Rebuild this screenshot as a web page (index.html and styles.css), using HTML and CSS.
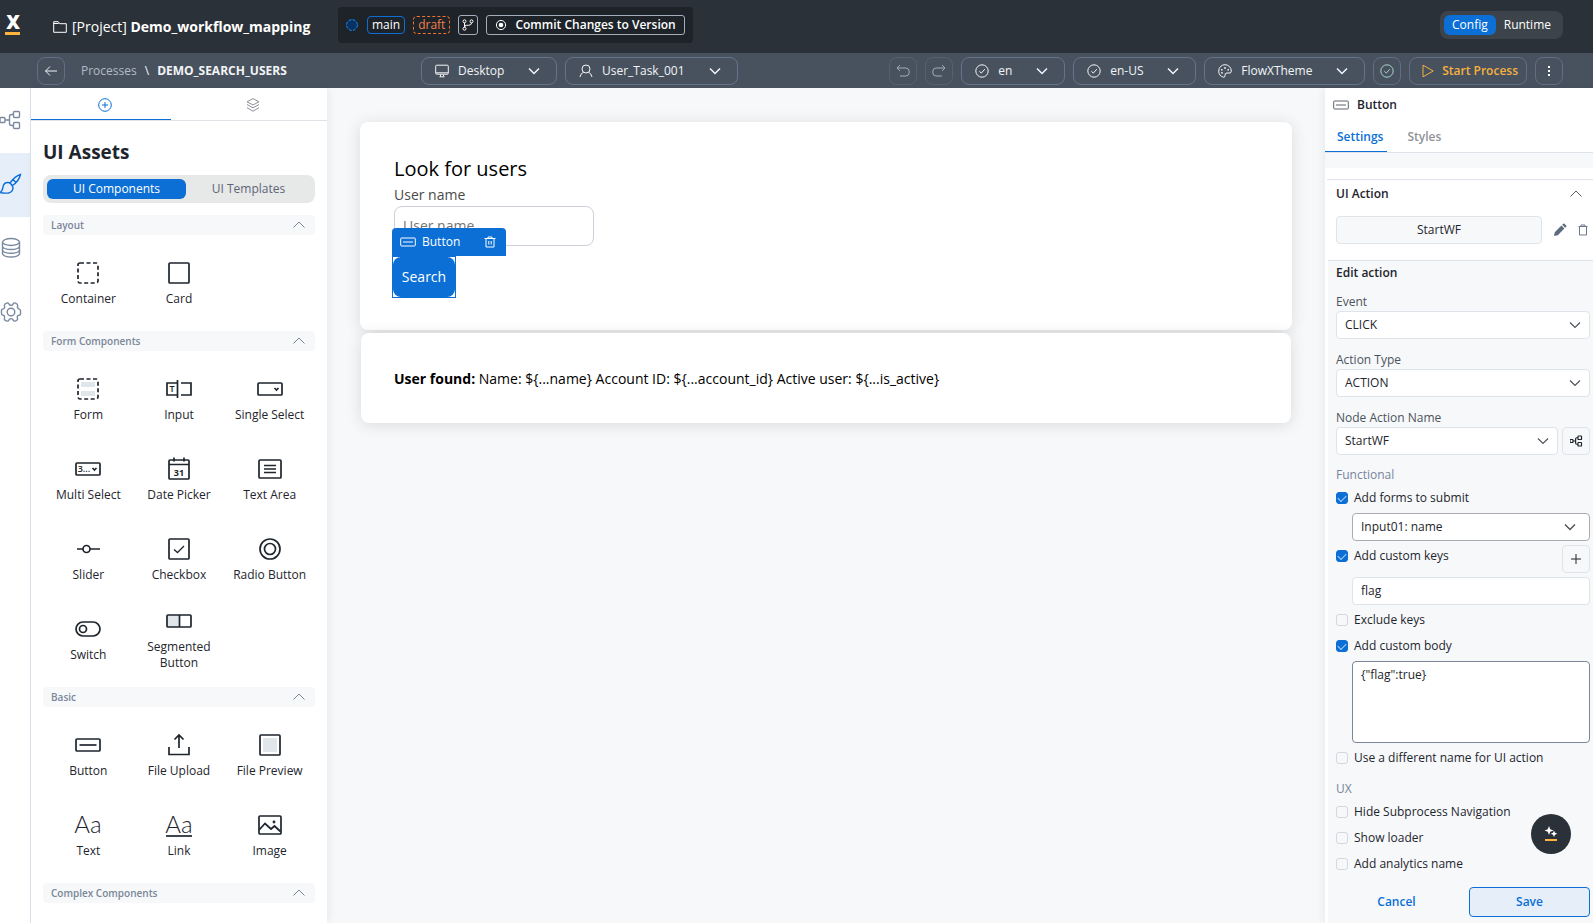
FILE: index.html
```html
<!DOCTYPE html>
<html lang="en">
<head>
  <meta charset="UTF-8">
  <title>Demo_workflow_mapping - DEMO_SEARCH_USERS</title>
  <meta name="viewport" content="width=device-width, initial-scale=1.0">
  <link rel="stylesheet" href="styles.css">
</head>
<body>
  <!-- shared icons -->
  <svg class="sprite" aria-hidden="true">
    <symbol id="down" viewBox="0 0 12 12"><path d="M1 3.5l5 5 5-5"/></symbol>
    <symbol id="up" viewBox="0 0 12 12"><path d="M.5 8.500L6 3l5.500 5.500"/></symbol>
    <symbol id="check-circle" viewBox="0 0 14 14"><circle cx="7" cy="7" r="6.200"/><path d="M4.300 7.200l2 1.900 3.500-3.900"/></symbol>
    <symbol id="flow" viewBox="0 0 22 20"><rect x="0" y="7.500" width="5" height="5" rx="1"/><rect x="13.500" y="1.500" width="6" height="6" rx="1"/><rect x="13.500" y="12.500" width="6" height="6" rx="1"/><path d="M5 10h4.500M13.500 4.500h-2q-2 0-2 2v7q0 2 2 2h2"/></symbol>
    <symbol id="button" viewBox="0 0 16 10"><rect x=".7" y="1" width="14.600" height="8" rx=".8"/><path d="M3 5h10"/></symbol>
    <symbol id="trash" viewBox="0 0 12 12"><path d="M.5 2.500h11M4 2.500v-1.500h4v1.500M2 2.500v8.500h8v-8.500M4.800 5v3.500M7.200 5v3.500"/></symbol>
  </svg>

  <header class="topbar">
    <div class="logo">
      <svg width="16" height="35" viewBox="0 0 16 35"><text x="8" y="20" class="logo-x">X</text><path d="M0 24.500h15" stroke="#ffb43c" stroke-width="3"/></svg>
    </div>
    <div class="project">
      <svg class="icon" width="14" height="14" viewBox="0 0 14 14"><path d="M.7 12.300V1.700h4.500l1.500 2h6.600v8.600z"/><path d="M.7 3.500h5" /></svg>
      <span>[Project] <b>Demo_workflow_mapping</b></span>
    </div>
    <div class="version">
      <svg width="13" height="12" viewBox="0 0 13 12"><circle cx="6" cy="6" r="5.400" fill="#063163" stroke="#2389ee" stroke-width="1" stroke-dasharray="3 1.240"/></svg>
      <span class="tag">main</span>
      <span class="tag draft">draft</span>
      <button class="branch" aria-label="Branches"><svg class="icon" width="12" height="12" viewBox="0 0 12 12"><circle cx="2.500" cy="2.300" r="1.500"/><circle cx="2.500" cy="9.700" r="1.500"/><circle cx="9.500" cy="2.300" r="1.500"/><path d="M2.500 3.800v4.400M9.500 3.800q0 2.500-3 2.500h-2q-2 0-2 2"/></svg></button>
      <button class="commit"><svg class="icon" width="12" height="12" viewBox="0 0 12 12"><circle cx="6" cy="6" r="4.600"/><circle cx="6" cy="6" r="2.300" fill="#fff" stroke="none"/></svg>Commit Changes to Version</button>
    </div>
    <div class="mode">
      <button class="active">Config</button>
      <button>Runtime</button>
    </div>
  </header>

  <nav class="subbar">
    <button class="square" aria-label="Back"><svg class="icon" width="14" height="14" viewBox="0 0 14 14"><path d="M6 2.500L1.500 7 6 11.500M1.500 7H13"/></svg></button>
    <div class="crumbs"><a href="#">Processes</a><span>\</span><b>DEMO_SEARCH_USERS</b></div>
    <div class="picker device">
      <svg class="icon lead" width="14" height="14" viewBox="0 0 14 14"><rect x=".7" y="1.200" width="12.600" height="9" rx="1"/><path d="M1 8.800h12M5.500 10.500v2M8.500 10.500v2M4.500 12.800h5"/></svg>
      <select aria-label="Device"><option>Desktop</option></select>
      <svg class="icon chev"><use href="#down"/></svg>
    </div>
    <div class="picker task">
      <svg class="icon lead" width="14" height="14" viewBox="0 0 14 14"><circle cx="7" cy="5" r="4"/><path d="M4.500 8.300Q1.500 9.500 1 13M9.500 8.300Q12.500 9.500 13 13"/></svg>
      <select aria-label="User task"><option>User_Task_001</option></select>
      <svg class="icon chev"><use href="#down"/></svg>
    </div>
    <div class="tools">
      <button class="square" disabled aria-label="Undo"><svg class="icon" width="14" height="14" viewBox="0 0 14 14"><path d="M4 1L1 4l3 3M1 4h9q3.300 0 3.300 4t-3.300 4H4"/></svg></button>
      <button class="square" disabled aria-label="Redo"><svg class="icon" width="14" height="14" viewBox="0 0 14 14"><path d="M10 1l3 3-3 3M13 4H4Q.7 4 .7 8T4 12h6"/></svg></button>
      <div class="picker lang">
        <svg class="icon lead"><use href="#check-circle"/></svg>
        <select aria-label="Language"><option>en</option></select>
        <svg class="icon chev"><use href="#down"/></svg>
      </div>
      <div class="picker locale">
        <svg class="icon lead"><use href="#check-circle"/></svg>
        <select aria-label="Locale"><option>en-US</option></select>
        <svg class="icon chev"><use href="#down"/></svg>
      </div>
      <div class="picker theme">
        <svg class="icon lead" width="14" height="14" viewBox="0 0 14 14"><path d="M5.500 13.200Q7 13.500 7 11.500 6.600 9 9 9h3q1.300-.2 1.300-2A6.300 6.300 0 0 0 .7 7q0 5 4.800 6.200z"/><g class="dots"><circle cx="4" cy="8.800" r=".9"/><circle cx="3.800" cy="5.800" r=".9"/><circle cx="7" cy="4" r=".9"/><circle cx="10.200" cy="5.800" r=".9"/></g></svg>
        <select aria-label="Theme"><option>FlowXTheme</option></select>
        <svg class="icon chev"><use href="#down"/></svg>
      </div>
      <button class="square ok" aria-label="Validate"><svg class="icon" width="14" height="14"><use href="#check-circle"/></svg></button>
      <button class="start"><svg class="icon" width="12" height="14" viewBox="0 0 12 14"><path d="M1 1.200L11.200 7 1 12.800z"/></svg>Start Process</button>
      <button class="square" aria-label="More"><svg width="14" height="14" viewBox="0 0 14 14" fill="#fff"><rect x="6" y="2" width="2" height="2"/><rect x="6" y="6" width="2" height="2"/><rect x="6" y="10" width="2" height="2"/></svg></button>
    </div>
  </nav>

  <main class="workspace">
    <aside class="rail">
      <button aria-label="Process"><svg class="icon" width="22" height="20"><use href="#flow"/></svg></button>
      <button class="active" aria-label="UI designer"><svg class="icon" width="22" height="22" viewBox="0 0 22 22"><path d="M10 10Q15 3 20.500 1.500 19 8 12.500 12.500zM8 9.500Q3.500 9.500 3 14 2.500 18 0 19.500q4 1 8.500.5 4.500-1 4.500-5.500Q11 9.500 8 9.500zM10 10l2.500 2.500M13 6.500l3 3"/></svg></button>
      <button aria-label="Data model"><svg class="icon" width="22" height="22" viewBox="0 0 22 22"><ellipse cx="11" cy="5" rx="8.500" ry="3.500"/><path d="M2.500 5v12q1.500 3 8.500 3t8.500-3V5M2.500 9.500q1.500 3 8.500 3t8.500-3M2.500 13.300q1.500 3 8.500 3t8.500-3"/></svg></button>
      <button aria-label="Settings"><svg class="icon" width="22" height="22" viewBox="0 0 22 22"><circle cx="11" cy="11" r="3.800"/><path d="M9.200 3.600Q8.700 1.300 6.500 2.200T4.300 4.500Q5.500 7 3.300 7.800T1.500 9.300v3.400q0 1.200 1.800 1.500T4.400 17.500q-.6 1.300 1.900 2.300t2.900-1.400q1.800-1.500 3.600 0 .6 2.400 2.900 1.400t1.900-2.300q-1.100-3 1.100-3.300t1.800-1.500V9.300q0-.8-1.800-1.500T17.700 4.500q0-1.300-2.200-2.300t-2.700 1.400q-1.800 1.400-3.600 0z"/></svg></button>
    </aside>

    <section class="assets">
      <div class="asset-tabs">
        <button class="active" aria-label="Add components"><svg class="icon" width="14" height="14" viewBox="0 0 14 14"><circle cx="7" cy="7" r="6.300"/><path d="M7 4v6M4 7h6"/></svg></button>
        <button aria-label="Layers"><svg class="icon" width="14" height="14" viewBox="0 0 14 14"><path d="M7 .6l6 3.200-6 3.200-6-3.200zM1 6.500l6 3.400 6-3.400M1 9.700l6 3.500 6-3.500"/></svg></button>
      </div>
      <div class="asset-body">
        <h1>UI Assets</h1>
        <div class="segmented">
          <button class="active">UI Components</button>
          <button>UI Templates</button>
        </div>

        <button class="group-title">Layout<svg class="icon"><use href="#up"/></svg></button>
        <div class="group">
          <div class="asset"><svg class="icon" viewBox="0 0 32 32"><rect x="6" y="6" width="20" height="20" rx="2" stroke-dasharray="4 2.500"/></svg>Container</div>
          <div class="asset"><svg class="icon" viewBox="0 0 32 32"><rect x="6" y="6" width="20" height="20" rx="1"/></svg>Card</div>
        </div>

        <button class="group-title">Form Components<svg class="icon"><use href="#up"/></svg></button>
        <div class="group">
          <div class="asset"><svg class="icon" viewBox="0 0 32 32"><path d="M9 9h14v5H9zM9 18h14v5H9z" class="tint"/><rect x="6" y="6" width="20" height="20" rx="2" stroke-dasharray="4 2.500"/></svg>Form</div>
          <div class="asset"><svg class="icon" viewBox="0 0 32 32"><path d="M14 10H4v12h10M14.500 7v18M18 10h10v12H18"/><text x="9" y="19" class="tiny">T</text></svg>Input</div>
          <div class="asset"><svg class="icon" viewBox="0 0 32 32"><rect x="4" y="10" width="24" height="12" rx="1"/><path d="M20.500 15l2 2 2-2"/></svg>Single Select</div>
          <div class="asset"><svg class="icon" viewBox="0 0 32 32"><rect x="4" y="10" width="24" height="12" rx="1"/><path d="M20.500 15l2 2 2-2"/><text x="12" y="19" class="tiny">3...</text></svg>Multi Select</div>
          <div class="asset"><svg class="icon" viewBox="0 0 32 32"><rect x="6" y="7" width="20" height="19" rx="1"/><path d="M6 11.500h20M11 4.500v4M21 4.500v4"/><text x="16" y="23" class="tiny day">31</text></svg>Date Picker</div>
          <div class="asset"><svg class="icon" viewBox="0 0 32 32"><rect x="5" y="7" width="22" height="18" rx="1"/><path d="M10 12.500h12M10 16h12M10 19.500h12"/></svg>Text Area</div>
          <div class="asset"><svg class="icon" viewBox="0 0 32 32"><circle cx="14.500" cy="16" r="3.500"/><path d="M5 16h6M18 16h10"/></svg>Slider</div>
          <div class="asset"><svg class="icon" viewBox="0 0 32 32"><rect x="6" y="6" width="20" height="20" rx="1"/><path d="M11 16.500l3.500 3L21 13" stroke-width="1.300"/></svg>Checkbox</div>
          <div class="asset"><svg class="icon" viewBox="0 0 32 32"><circle cx="16" cy="16" r="10"/><circle cx="16" cy="16" r="5.500"/></svg>Radio Button</div>
          <div class="asset"><svg class="icon" viewBox="0 0 32 32"><rect x="4" y="9" width="24" height="14" rx="7"/><circle cx="11" cy="16" r="3.500"/></svg>Switch</div>
          <div class="asset"><svg class="icon" viewBox="0 0 32 32"><path d="M4 10h13v12H4z" class="tint"/><rect x="4" y="10" width="24" height="12" rx="1"/><path d="M16.500 10v12"/></svg>Segmented<br>Button</div>
        </div>

        <button class="group-title">Basic<svg class="icon"><use href="#up"/></svg></button>
        <div class="group">
          <div class="asset"><svg class="icon" viewBox="0 0 32 32"><rect x="4" y="10" width="24" height="12" rx="1"/><path d="M7.500 16h17"/></svg>Button</div>
          <div class="asset"><svg class="icon" viewBox="0 0 32 32"><path d="M16 19V6M11.500 10.500L16 6l4.500 4.500M6 18v7.500h20V18"/></svg>File Upload</div>
          <div class="asset"><svg class="icon" viewBox="0 0 32 32"><path d="M9 9h14v14H9z" class="tint"/><rect x="6" y="6" width="20" height="20" rx="1"/></svg>File Preview</div>
          <div class="asset"><svg class="icon" viewBox="0 0 32 32"><text x="16" y="24" class="aa">Aa</text></svg>Text</div>
          <div class="asset"><svg class="icon" viewBox="0 0 32 32"><text x="16" y="24" class="aa">Aa</text><path d="M3 27h26"/></svg>Link</div>
          <div class="asset"><svg class="icon" viewBox="0 0 32 32"><rect x="5" y="7" width="22" height="18" rx="1"/><path d="M5.500 20.500l5.500-6 6 5.500 3.500-3 6 5.500"/><circle cx="20" cy="13" r=".6"/></svg>Image</div>
        </div>

        <button class="group-title">Complex Components<svg class="icon"><use href="#up"/></svg></button>
      </div>
    </section>

    <section class="canvas">
      <div class="card">
        <h2>Look for users</h2>
        <label class="field-label" for="userName">User name</label>
        <input class="user-name" id="userName" type="text" placeholder="User name">
        <div class="selected">
          <div class="selected-bar"><svg class="icon" width="16" height="10"><use href="#button"/></svg>Button<button aria-label="Delete"><svg class="icon" width="12" height="12"><use href="#trash"/></svg></button></div>
          <button class="search">Search</button>
        </div>
      </div>
      <div class="card result">
        <p><b>User found:</b> Name: ${...name} Account ID: ${...account_id} Active user: ${...is_active}</p>
      </div>
    </section>

    <aside class="inspector">
      <div class="inspector-title"><svg class="icon" width="16" height="10"><use href="#button"/></svg>Button</div>
      <div class="inspector-tabs">
        <button class="active">Settings</button>
        <button>Styles</button>
      </div>
      <div class="spacer"></div>
      <div class="ui-action">
        <div class="ui-action-title">UI Action<svg class="icon" width="12" height="12"><use href="#up"/></svg></div>
        <div class="ui-action-row">
          <button class="action-name">StartWF</button>
          <button class="bare" aria-label="Edit"><svg width="14" height="14" viewBox="0 0 14 14" fill="#5c6b80"><path d="M1 13l.8-3.800 6.600-6.600 3 3L4.800 12.200zM9.200 1.800l1-1q.6-.5 1.200 0l1.800 1.800q.5.600 0 1.200l-1 1z"/></svg></button>
          <button class="bare" aria-label="Delete"><svg class="icon" width="10" height="12" viewBox="0 0 10 12"><path d="M.5 2.500h9M3 2.500v-1.500h4v1.500M1.500 2.500v8.500h7v-8.500"/></svg></button>
        </div>
      </div>

      <form class="edit">
        <h3>Edit action</h3>
        <label class="caption" for="event">Event</label>
        <div class="select"><select id="event"><option>CLICK</option></select><svg class="icon"><use href="#down"/></svg></div>
        <label class="caption" for="actionType">Action Type</label>
        <div class="select"><select id="actionType"><option>ACTION</option></select><svg class="icon"><use href="#down"/></svg></div>
        <label class="caption" for="nodeAction">Node Action Name</label>
        <div class="node-row">
          <div class="select"><select id="nodeAction"><option>StartWF</option></select><svg class="icon"><use href="#down"/></svg></div>
          <button type="button" class="mini" aria-label="Open node"><svg class="icon" width="13" height="12"><use href="#flow"/></svg></button>
        </div>

        <div class="section-name">Functional</div>
        <label class="check"><input type="checkbox" checked>Add forms to submit</label>
        <div class="select nested strong"><select aria-label="Forms to submit"><option>Input01: name</option></select><svg class="icon"><use href="#down"/></svg></div>
        <div class="keys-row">
          <label class="check"><input type="checkbox" checked>Add custom keys</label>
          <button type="button" class="mini" aria-label="Add key"><svg class="icon" width="10" height="10" viewBox="0 0 10 10"><path d="M5 0v10M0 5h10"/></svg></button>
        </div>
        <div class="nested"><input class="text" type="text" value="flag" aria-label="Custom key"></div>
        <label class="check"><input type="checkbox">Exclude keys</label>
        <label class="check"><input type="checkbox" checked>Add custom body</label>
        <div class="nested"><textarea aria-label="Custom body">{"flag":true}</textarea></div>
        <label class="check"><input type="checkbox">Use a different name for UI action</label>

        <div class="section-name">UX</div>
        <label class="check"><input type="checkbox">Hide Subprocess Navigation</label>
        <label class="check"><input type="checkbox">Show loader</label>
        <label class="check"><input type="checkbox">Add analytics name</label>
        <div class="actions">
          <button type="button" class="cancel">Cancel</button>
          <button type="button" class="save">Save</button>
        </div>
      </form>
    </aside>
  </main>

  <button class="assistant" aria-label="Assistant">
    <svg width="16" height="16" viewBox="0 0 16 16"><path d="M6 0l1.200 3.300L10.500 4.500 7.200 5.700 6 9 4.800 5.700 1.500 4.500 4.800 3.300zM11 4.500l1 2.300 2.300 1-2.300 1-1 2.300-1-2.300-2.300-1 2.300-1z" fill="#fff"/><path d="M2 14h12" stroke="#ffb43c" stroke-width="2"/></svg>
  </button>
</body>
</html>
```

FILE: styles.css
```css
* {
  box-sizing: border-box;
}
body {
  font-family: 'Open Sans', Arial, sans-serif;
  font-size: 12px;
  line-height: 16px;
  color: #1e252d;
  margin: 0;
  height: 100vh;
  display: flex;
  flex-direction: column;
  overflow: hidden;
}
button, select, input, textarea {
  font: inherit;
  color: inherit;
  margin: 0;
}
button {
  display: flex;
  align-items: center;
  justify-content: center;
  background: none;
  border: none;
  padding: 0;
  cursor: pointer;
}
select {
  appearance: none;
  width: 100%;
  height: 28px;
}
b {
  font-weight: 700;
}
.sprite {
  position: absolute;
  width: 0;
  height: 0;
}
.icon {
  fill: none;
  stroke: currentColor;
  flex: none;
}

/* top bar */
.topbar {
  flex: none;
  height: 53px;
  background: #2b3138;
  color: #fff;
  display: flex;
  align-items: center;
  padding: 0 30px 0 5px;
}
.logo {
  display: flex;
  width: 48px;
}
.logo-x {
  font-size: 19px;
  font-weight: 800;
  text-anchor: middle;
  fill: #fff;
}
.project {
  display: flex;
  align-items: center;
  gap: 5px;
  font-size: 14px;
  width: 285px;
}
.version {
  display: flex;
  align-items: center;
  gap: 8px;
  height: 36px;
  padding: 0 8px;
  margin-bottom: 4px;
  border-radius: 4px;
  background: #1d2329;
}
.tag {
  border: 1px solid #0b6fd6;
  border-radius: 4px;
  padding: 0 4px;
}
.draft {
  border: 1px dashed #f2722f;
  color: #f08048;
}
.branch, .commit {
  height: 20px;
  border: 1px solid #a3adbb;
  border-radius: 3px;
}
.branch {
  width: 20px;
}
.commit {
  gap: 8px;
  padding: 0 8px;
  font-weight: 600;
}
.mode {
  display: flex;
  margin: 0 0 4px auto;
  padding: 4px;
  border-radius: 8px;
  background: #3d434a;
}
.mode button {
  height: 20px;
  padding: 0 8px;
  border-radius: 6px;
}
.mode .active {
  background: #0b6fd6;
}

/* process bar */
.subbar {
  flex: none;
  height: 35px;
  background: #48525f;
  color: #f2f4f6;
  display: flex;
  align-items: center;
  gap: 8px;
  padding: 1px 30px 0 37px;
}
.square {
  width: 28px;
  height: 28px;
  border: 1px solid #5f6f86;
  border-radius: 8px;
}
.square:disabled {
  color: #a4aab2;
  border-color: #556070;
}
.ok {
  color: #a9d3cc;
}
.crumbs {
  display: flex;
  gap: 8px;
  width: 340px;
  padding-left: 8px;
}
.crumbs a {
  color: #b4bac2;
  text-decoration: none;
}
.tools {
  display: flex;
  gap: 8px;
  margin-left: auto;
}
.picker {
  position: relative;
}
.picker select {
  background: transparent;
  border: 1px solid #64748b;
  border-radius: 8px;
  padding: 0 36px;
}
.picker .lead {
  position: absolute;
  left: 14px;
  top: 7px;
  width: 14px;
  height: 14px;
}
.picker .chev {
  position: absolute;
  right: 17px;
  top: 8px;
  width: 12px;
  height: 12px;
  stroke-width: 1.5;
}
.dots {
  fill: currentColor;
  stroke: none;
}
.device {
  width: 136px;
}
.task {
  width: 173px;
}
.lang {
  width: 104px;
}
.locale {
  width: 123px;
}
.theme {
  width: 161px;
}
.start {
  height: 28px;
  gap: 8px;
  padding: 0 8px 0 12px;
  border: 1px solid #5f6f86;
  border-radius: 8px;
  color: #f5b03e;
  font-weight: 600;
}

/* workspace */
.workspace {
  flex: 1;
  min-height: 0;
  display: flex;
  background: #f6f8fa;
}
.rail {
  flex: none;
  width: 31px;
  padding-top: 1px;
  border-right: 1px solid #dde3ea;
  background: #fff;
  color: #7b8aa0;
}
.rail button {
  width: 30px;
  height: 64px;
  padding-bottom: 2px;
  justify-content: flex-start;
}
.rail svg {
  stroke-width: 1.4;
}
.rail .active {
  background: #e6eefa;
  color: #0b6fd6;
}
.assets {
  flex: none;
  width: 296px;
  background: #fff;
  overflow: hidden;
  box-shadow: 2px 0 8px rgba(0,0,0,0.06);
}
.asset-tabs {
  display: flex;
  height: 33px;
  border-bottom: 1px solid #dfe3e8;
}
.asset-tabs button {
  position: relative;
  flex: 1;
  padding-top: 2px;
  color: #8d9197;
}
.asset-tabs .active {
  color: #0b6fd6;
}
.asset-tabs .active::after {
  content: "";
  position: absolute;
  left: 0;
  right: 8px;
  bottom: 0;
  height: 1px;
  background: #0b6fd6;
}
.asset-body {
  padding: 18px 12px 0;
}
h1 {
  font-size: 19px;
  line-height: 26px;
  font-weight: 700;
  margin: 0 0 10px;
}
.segmented {
  display: flex;
  padding: 4px;
  border-radius: 8px;
  background: #e7e9e9;
  margin-bottom: 12px;
}
.segmented button {
  height: 20px;
  flex: 1;
  border-radius: 6px;
  color: #5c6675;
}
.segmented .active {
  flex: none;
  width: 139px;
  background: #0b6fd6;
  color: #fff;
}
.group-title {
  width: 100%;
  height: 20px;
  padding: 0 10px 0 8px;
  justify-content: space-between;
  border-radius: 4px;
  background: #f6f8fa;
  color: #7b8798;
  font-size: 10px;
  font-weight: 600;
}
.group-title svg {
  width: 12px;
  height: 12px;
}
.group {
  display: grid;
  grid-template-columns: repeat(3, 1fr);
  grid-auto-rows: 80px;
  padding: 7px 0 9px;
}
.asset {
  display: flex;
  flex-direction: column;
  align-items: center;
  justify-content: center;
  text-align: center;
}
.asset svg {
  width: 32px;
  height: 32px;
  margin-bottom: 2px;
  stroke-width: 1.7;
}
.tint {
  fill: #e1e6eb;
  stroke: none;
}
.tiny, .aa {
  fill: currentColor;
  stroke: none;
  text-anchor: middle;
}
.tiny {
  font-size: 9px;
  font-weight: 600;
}
.day {
  font-weight: 700;
}
.aa {
  font-family: Lato, 'Open Sans', sans-serif;
  font-size: 24px;
  font-weight: 300;
}

/* canvas */
.canvas {
  flex: 1;
  min-width: 0;
  padding: 34px 33px;
  font-size: 14px;
  color: #000;
}
.card {
  padding: 33px 34px 32px;
  border-radius: 8px;
  background: #fff;
  box-shadow: 0 2px 16px rgba(0,0,0,0.12);
}
h2 {
  font-size: 20px;
  line-height: 28px;
  font-weight: 400;
  margin: 0;
}
.field-label {
  display: block;
  line-height: 20px;
  margin: 2px 0 1px;
  color: #4a4a4a;
}
.user-name {
  display: block;
  width: 200px;
  height: 40px;
  padding: 0 8px 2px;
  border: 1px solid #cbd0da;
  border-radius: 8px;
}
.selected {
  position: relative;
  width: 64px;
  margin: 10px 0 0 -2px;
  border: 1px solid #0b6fd6;
}
.selected-bar {
  position: absolute;
  left: -1px;
  bottom: 41px;
  width: 114px;
  height: 28px;
  padding: 0 10px 0 8px;
  display: flex;
  align-items: center;
  gap: 6px;
  border-radius: 4px 4px 0 0;
  background: #0b6fd6;
  color: #fff;
  font-size: 12px;
}
.selected-bar button {
  margin-left: auto;
}
.search {
  width: 62px;
  height: 40px;
  border-radius: 8px;
  background: #0b6fd6;
  color: #fff;
}
.result {
  margin: 3px 1px 0;
  padding: 36px 33px 34px;
}
.result p {
  line-height: 20px;
  margin: 0;
}

/* inspector */
.inspector {
  flex: none;
  width: 268px;
  display: flex;
  flex-direction: column;
  background: #fff;
  box-shadow: -2px 0 8px rgba(0,0,0,0.06);
}
.inspector-title {
  display: flex;
  align-items: center;
  gap: 8px;
  height: 33px;
  padding-left: 8px;
  font-weight: 600;
}
.inspector-title svg {
  color: #5c636c;
}
.inspector-tabs {
  display: flex;
  height: 32px;
  border-bottom: 1px solid #dfe4ea;
  font-weight: 600;
  color: #8f9398;
}
.inspector-tabs button {
  padding: 1px 20px 0;
}
.inspector-tabs .active {
  padding: 2px 4px 0 12px;
  border-bottom: 1px solid #0b6fd6;
  color: #0b6fd6;
}
.spacer {
  height: 15px;
  background: #f6f8fa;
}
.ui-action {
  margin: 11px 0 0 2px;
  padding: 0 0 16px 9px;
  border-top: 1px solid #dfe4ea;
}
.ui-action-title {
  display: flex;
  align-items: center;
  justify-content: space-between;
  height: 28px;
  padding-right: 11px;
  font-weight: 600;
}
.ui-action-title svg {
  color: #5a6068;
}
.ui-action-row {
  display: flex;
  align-items: center;
  margin-top: 8px;
}
.action-name {
  flex: 1;
  height: 28px;
  border: 1px solid #e0e5ea;
  border-radius: 4px;
  background: #f6f8fa;
}
.bare {
  margin-left: 11px;
  color: #6b788c;
}
.bare:last-child {
  margin-right: 5px;
}
.edit {
  flex: 1;
  margin-left: 3px;
  padding: 0 3px 6px 8px;
  border-top: 1px solid #dfe4ea;
  background: #f6f8fa;
}
h3 {
  font-size: 12px;
  line-height: 24px;
  font-weight: 600;
  margin: 0 0 8px;
}
.caption {
  display: block;
  line-height: 18px;
  color: #4d545c;
}
.select {
  position: relative;
  flex: 1;
  margin-bottom: 12px;
}
.select select, .text, textarea {
  display: block;
  width: 100%;
  padding: 0 8px;
  border: 1px solid #dfe4ea;
  border-radius: 4px;
  background: #fff;
}
.select svg {
  position: absolute;
  right: 9px;
  top: 8px;
  width: 12px;
  height: 12px;
  color: #4d545c;
  stroke-width: 1.2;
}
.node-row {
  display: flex;
  gap: 4px;
}
.node-row .select {
  margin-bottom: 2px;
}
.mini {
  width: 28px;
  height: 28px;
  border: 1px solid #dfe4ea;
  border-radius: 4px;
}
.node-row .mini svg {
  stroke-width: 2;
}
.section-name {
  margin-top: 8px;
  line-height: 20px;
  color: #76849a;
}
.check {
  display: flex;
  align-items: center;
  gap: 6px;
  height: 26px;
}
.check input {
  appearance: none;
  width: 12px;
  height: 12px;
  border: 1px solid #d3d8df;
  border-radius: 3px;
  display: grid;
  place-items: center;
}
.check input:checked {
  background: #0b6fd6;
  border-color: #0b6fd6;
}
.check input:checked::after {
  content: "";
  width: 7px;
  height: 4px;
  border: solid #b5d3f5;
  border-width: 0 0 1px 1px;
  transform: translateY(-1px) rotate(-45deg);
}
.nested {
  margin: 2px 0 2px 16px;
}
.strong select {
  border-color: #a9adb3;
}
.select.strong svg {
  right: 14px;
  stroke-width: 1.5;
}
.keys-row {
  display: flex;
  justify-content: space-between;
  margin: 4px 0;
}
.keys-row .check {
  height: 22px;
}
.text {
  height: 28px;
  padding-bottom: 2px;
}
textarea {
  height: 82px;
  padding: 5px 8px;
  border-color: #7b8798;
  resize: none;
}
.actions {
  display: grid;
  grid-template-columns: 121px 121px;
  justify-content: space-between;
  margin-top: 10px;
}
.actions button {
  height: 30px;
  border-radius: 4px;
  color: #0b6fd6;
  font-weight: 600;
}
.actions .save {
  border: 1px solid #0b6fd6;
  background: #e6eefa;
}
.assistant {
  position: fixed;
  right: 22px;
  bottom: 69px;
  width: 40px;
  height: 40px;
  border-radius: 50%;
  background: #2b3138;
}
```
